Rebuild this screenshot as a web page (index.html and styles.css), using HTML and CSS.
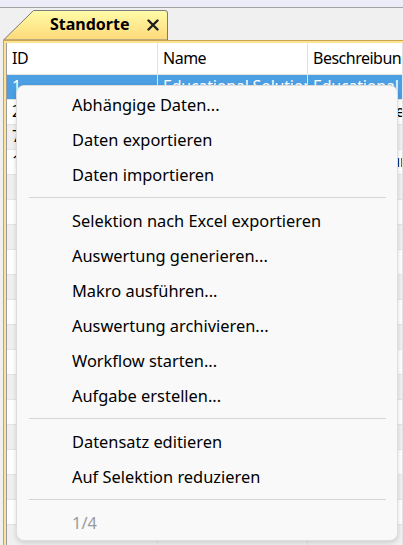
FILE: index.html
```html
<!DOCTYPE html>
<html lang="de">
<head>
<meta charset="utf-8">
<title>Standorte</title>
<link rel="stylesheet" href="styles.css">
</head>
<body>
<div class="topbar"></div>
<div class="tabstrip">
  <div class="tab">
    <svg class="tab-shape" width="166" height="32" viewBox="0 0 166 32">
      <defs>
        <linearGradient id="tabfill" x1="0" y1="0" x2="0" y2="1">
          <stop offset="0" stop-color="#fffca8"/>
          <stop offset="1" stop-color="#ffd97a"/>
        </linearGradient>
      </defs>
      <path d="M0.5 32 L30.5 2.5 L162 2.5 Q164.5 2.5 164.5 5 L164.5 32 Z" fill="url(#tabfill)" stroke="#7a7a7a" stroke-width="1"/>
    </svg>
    <span class="tab-title">Standorte</span>
    <svg class="tab-close" width="12" height="12" viewBox="0 0 12 12" aria-label="Schließen">
      <path d="M1.5 1.5 L10.5 10.5 M10.5 1.5 L1.5 10.5" stroke="#1e1e1e" stroke-width="2.4" stroke-linecap="round"/>
    </svg>
  </div>
</div>
<div class="panel">
  <div class="grid">
    <div class="row head">
      <div class="cell">ID</div><div class="cell">Name</div><div class="cell">Beschreibung</div>
    </div>
    <div class="row selected">
      <div class="cell">1</div><div class="cell">Educational Solution</div><div class="cell">Educational Solution</div>
    </div>
    <div class="row">
      <div class="cell">2</div><div class="cell">Hauptsitz</div><div class="cell">Hauptsitz Zentrale</div>
    </div>
    <div class="row alt">
      <div class="cell">7</div><div class="cell">Lager Nord</div><div class="cell">Lager Nord</div>
    </div>
    <div class="row">
      <div class="cell">1</div><div class="cell">Niederlassung</div><div class="cell">Niederlassung Süd</div>
    </div>
    <div class="row alt"><div class="cell"></div><div class="cell"></div><div class="cell"></div></div>
    <div class="row"><div class="cell"></div><div class="cell"></div><div class="cell"></div></div>
    <div class="row alt"><div class="cell"></div><div class="cell"></div><div class="cell"></div></div>
    <div class="row"><div class="cell"></div><div class="cell"></div><div class="cell"></div></div>
    <div class="row alt"><div class="cell"></div><div class="cell"></div><div class="cell"></div></div>
    <div class="row"><div class="cell"></div><div class="cell"></div><div class="cell"></div></div>
    <div class="row alt"><div class="cell"></div><div class="cell"></div><div class="cell"></div></div>
    <div class="row"><div class="cell"></div><div class="cell"></div><div class="cell"></div></div>
    <div class="row alt"><div class="cell"></div><div class="cell"></div><div class="cell"></div></div>
    <div class="row"><div class="cell"></div><div class="cell"></div><div class="cell"></div></div>
    <div class="row alt"><div class="cell"></div><div class="cell"></div><div class="cell"></div></div>
    <div class="row"><div class="cell"></div><div class="cell"></div><div class="cell"></div></div>
    <div class="row alt"><div class="cell"></div><div class="cell"></div><div class="cell"></div></div>
    <div class="row"><div class="cell"></div><div class="cell"></div><div class="cell"></div></div>
    <div class="row alt"><div class="cell"></div><div class="cell"></div><div class="cell"></div></div>
  </div>
</div>

<ul class="menu">
  <li class="item">Abhängige Daten...</li>
  <li class="item">Daten exportieren</li>
  <li class="item">Daten importieren</li>
  <li class="sep"></li>
  <li class="item">Selektion nach Excel exportieren</li>
  <li class="item">Auswertung generieren...</li>
  <li class="item">Makro ausführen...</li>
  <li class="item">Auswertung archivieren...</li>
  <li class="item">Workflow starten...</li>
  <li class="item">Aufgabe erstellen...</li>
  <li class="sep"></li>
  <li class="item">Datensatz editieren</li>
  <li class="item">Auf Selektion reduzieren</li>
  <li class="sep"></li>
  <li class="item disabled">1/4</li>
</ul>
</body>
</html>
```

FILE: styles.css
```css
html, body {
  margin: 0;
  padding: 0;
}

body {
  width: 403px;
  height: 545px;
  overflow: hidden;
  background: #f0f0f0;
  font-family: "Noto Sans", "Open Sans", sans-serif;
  font-size: 16.4px;
  color: #000;
  position: relative;
}

.topbar {
  height: 7px;
  background: #ececf8;
  border-bottom: 1px solid #a3a3a3;
}

.tabstrip {
  height: 32px;
  display: flex;
  align-items: flex-end;
  padding-left: 3px;
}

.tab {
  position: relative;
  width: 166px;
  height: 32px;
  display: flex;
  align-items: center;
  box-sizing: border-box;
  padding-left: 47px;
  padding-top: 2px;
}

.tab-shape {
  position: absolute;
  left: 0;
  top: 0;
}

.tab-title {
  position: relative;
  font-weight: 700;
  font-size: 16px;
  padding-bottom: 2px;
}

.tab-close {
  position: relative;
  margin-left: 17px;
}

.panel {
  margin-left: 3px;
  border-top: 1px solid #c9a552;
  border-left: 1px solid #c9a552;
  background: #fde392;
  padding: 2px 0 0 2px;
}

.grid {
  background: #fff;
  border-left: 1px solid #9c9c9c;
  font-size: 16px;
  letter-spacing: -0.2px;
}

.row {
  display: grid;
  grid-template-columns: 151px 150px 1fr;
  height: 25px;
  box-sizing: border-box;
  border-bottom: 1px solid #e4e4e4;
  white-space: nowrap;
  overflow: hidden;
}

.row.head {
  height: 32px;
  letter-spacing: -0.5px;
}

.cell {
  padding: 0 0 2px 5px;
  border-right: 1px solid #e2e2e2;
  display: flex;
  align-items: center;
  overflow: hidden;
}

.row.alt {
  background: #f0f0f0;
}

.row.selected {
  background: #4c9fe2;
  color: #fff;
}

.row.selected .cell {
  border-right-color: #d8e8f6;
}

.menu {
  position: absolute;
  left: 16px;
  top: 85px;
  width: 382px;
  height: 456px;
  box-sizing: border-box;
  margin: 0;
  padding: 3px 0 0 0;
  list-style: none;
  background: #f9f9f9;
  border: 1px solid #dedede;
  border-radius: 8px;
  box-shadow: 0 2px 5px rgba(0, 0, 0, 0.14);
}

.item {
  height: 35px;
  box-sizing: border-box;
  display: flex;
  align-items: center;
  padding: 0 0 4px 55px;
  white-space: nowrap;
}

.item.disabled {
  color: #9b9b9b;
}

.sep {
  height: 11px;
  box-sizing: border-box;
  padding-top: 3px;
  margin: 0 11px 0 12px;
}

.sep::before {
  content: "";
  display: block;
  height: 1px;
  background: #d6d6d6;
}
```
